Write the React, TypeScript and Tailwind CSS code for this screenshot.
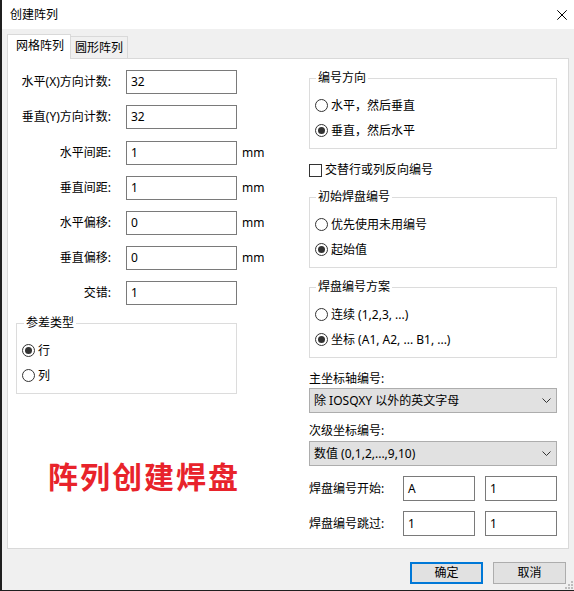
import React from "react";

function Radio({ checked, label }: { checked?: boolean; label: string }) {
  return (
    <div className="flex items-center h-[25px]">
      <span className="w-[13px] h-[13px] rounded-full border border-[#333333] bg-white flex items-center justify-center shrink-0">
        {checked && <span className="w-[7px] h-[7px] rounded-full bg-[#333333]" />}
      </span>
      <span className="ml-[3px] leading-[16px]">{label}</span>
    </div>
  );
}

function Group({
  title,
  children,
  className,
  legendMl,
}: {
  title: string;
  children: React.ReactNode;
  className?: string;
  legendMl: string;
}) {
  return (
    <fieldset className={"border border-[#dcdcdc] p-0 m-0 min-w-0 " + (className ?? "")}>
      <legend className={"px-[2px] leading-[16px] " + legendMl}>{title}</legend>
      <div className="pl-[5px] pt-[7px] pb-[5px]">{children}</div>
    </fieldset>
  );
}

function LeftRow({
  label,
  value,
  unit,
  className,
}: {
  label: string;
  value: string;
  unit?: boolean;
  className?: string;
}) {
  return (
    <div className={"flex items-center h-[24px] " + (className ?? "")}>
      <div className="w-[118px] pr-[15px] text-right leading-[16px]">{label}</div>
      <div className="w-[111px] h-[24px] border border-[#7a7a7a] pl-[4px] flex items-center leading-[16px]">
        {value}
      </div>
      {unit && <span className="ml-[5px] leading-[16px]">mm</span>}
    </div>
  );
}

function Select({ text, className }: { text: string; className?: string }) {
  return (
    <div
      className={
        "h-[25px] w-[248px] bg-[#e1e1e1] border border-[#adadad] flex items-center justify-between pl-[4px] pr-[5px] " +
        (className ?? "")
      }
    >
      <span className="leading-[16px]">{text}</span>
      <svg width="9" height="5" viewBox="0 0 9 5" className="shrink-0">
        <polyline points="0.5,0.5 4.5,4.5 8.5,0.5" fill="none" stroke="#333" strokeWidth="1" />
      </svg>
    </div>
  );
}

function SmallInput({ value }: { value: string }) {
  return (
    <div className="w-[72px] h-[25px] border border-[#7a7a7a] bg-white pl-[4px] flex items-center leading-[16px]">
      {value}
    </div>
  );
}

export default function App() {
  return (
    <div className="relative w-[574px] h-[591px] bg-[#f0f0f0] border-l-2 border-b border-[#1f1f1f] flex flex-col text-[12px] text-black font-['Noto_Sans','Noto_Sans_CJK_SC',sans-serif] overflow-hidden">
      {/* title bar */}
      <div className="h-[29px] bg-white flex items-center justify-between pl-[8px] pr-[7px] shrink-0">
        <span className="leading-[16px]">创建阵列</span>
        <svg width="10" height="10" viewBox="0 0 10 10">
          <line x1="0.3" y1="0.3" x2="9.7" y2="9.7" stroke="#000" strokeWidth="1" />
          <line x1="9.7" y1="0.3" x2="0.3" y2="9.7" stroke="#000" strokeWidth="1" />
        </svg>
      </div>

      {/* tabs */}
      <div className="mt-[5px] ml-[5px] flex items-end h-[24px]">
        <div className="relative z-10 -mb-px w-[64px] h-[25px] bg-white border-t border-l border-r border-[#d9d9d9] pl-[8px] pt-[3px] leading-[16px]">
          网格阵列
        </div>
        <div className="w-[57px] h-[22px] border-t border-r border-[#d9d9d9] pl-[4px] pt-[3px] leading-[16px]">
          圆形阵列
        </div>
      </div>

      {/* panel */}
      <div className="ml-[5px] w-[562px] h-[491px] border border-[#d9d9d9] bg-white flex shrink-0">
        {/* left column */}
        <div className="w-[293px] flex flex-col pt-[11px]">
          <LeftRow label="水平(X)方向计数:" value="32" />
          <LeftRow label="垂直(Y)方向计数:" value="32" className="mt-[11px]" />
          <LeftRow label="水平间距:" value="1" unit className="mt-[12px]" />
          <LeftRow label="垂直间距:" value="1" unit className="mt-[11px]" />
          <LeftRow label="水平偏移:" value="0" unit className="mt-[11px]" />
          <LeftRow label="垂直偏移:" value="0" unit className="mt-[11px]" />
          <LeftRow label="交错:" value="1" className="mt-[11px]" />

          <Group title="参差类型" className="ml-[8px] w-[221px] mt-[10px]" legendMl="ml-[7px]">
            <Radio checked label="行" />
            <Radio label="列" />
          </Group>

          <div className="ml-[40px] mt-[68px] leading-[30px] text-[30px] font-bold tracking-[2px] text-[#e8232b]">
            阵列创建焊盘
          </div>
        </div>

        {/* right column */}
        <div className="ml-[8px] w-[248px] flex flex-col pt-[11px]">
          <Group title="编号方向" legendMl="ml-[6px]">
            <Radio label="水平，然后垂直" />
            <Radio checked label="垂直，然后水平" />
          </Group>

          <div className="mt-[11px] h-[20px] flex items-center">
            <span className="w-[13px] h-[13px] border border-[#333333] bg-white shrink-0" />
            <span className="ml-[3px] leading-[16px]">交替行或列反向编号</span>
          </div>

          <Group title="初始焊盘编号" className="mt-[9px]" legendMl="ml-[6px]">
            <Radio label="优先使用未用编号" />
            <Radio checked label="起始值" />
          </Group>

          <Group title="焊盘编号方案" className="mt-[11px]" legendMl="ml-[6px]">
            <Radio label="连续 (1,2,3, ...)" />
            <Radio checked label="坐标 (A1, A2, ... B1, ...)" />
          </Group>

          <div className="mt-[13px] h-[16px] leading-[16px]">主坐标轴编号:</div>
          <Select text="除 IOSQXY 以外的英文字母" className="mt-[1px]" />

          <div className="mt-[10px] h-[16px] leading-[16px]">次级坐标编号:</div>
          <Select text="数值 (0,1,2,...,9,10)" className="mt-[2px]" />

          <div className="mt-[10px] h-[25px] flex items-center">
            <div className="w-[94px] leading-[16px]">焊盘编号开始:</div>
            <SmallInput value="A" />
            <div className="ml-[10px]">
              <SmallInput value="1" />
            </div>
          </div>
          <div className="mt-[10px] h-[25px] flex items-center">
            <div className="w-[94px] leading-[16px]">焊盘编号跳过:</div>
            <SmallInput value="1" />
            <div className="ml-[10px]">
              <SmallInput value="1" />
            </div>
          </div>
        </div>
      </div>

      {/* buttons */}
      <div className="mt-[13px] h-[22px] flex justify-end gap-[10px] pr-[8px]">
        <button className="w-[73px] h-[22px] bg-[#e1e1e1] border-2 border-[#0078d7] flex items-center justify-center leading-[16px]">
          确定
        </button>
        <button className="w-[73px] h-[22px] bg-[#e1e1e1] border border-[#adadad] flex items-center justify-center leading-[16px]">
          取消
        </button>
      </div>

      {/* size grip */}
      <svg width="9" height="9" viewBox="0 0 9 9" className="absolute right-[1px] bottom-[1px]">
        <rect x="7" y="1" width="2" height="2" fill="#bdbdbd" />
        <rect x="4" y="4" width="2" height="2" fill="#bdbdbd" />
        <rect x="7" y="4" width="2" height="2" fill="#bdbdbd" />
        <rect x="1" y="7" width="2" height="2" fill="#bdbdbd" />
        <rect x="4" y="7" width="2" height="2" fill="#bdbdbd" />
        <rect x="7" y="7" width="2" height="2" fill="#bdbdbd" />
      </svg>
    </div>
  );
}
